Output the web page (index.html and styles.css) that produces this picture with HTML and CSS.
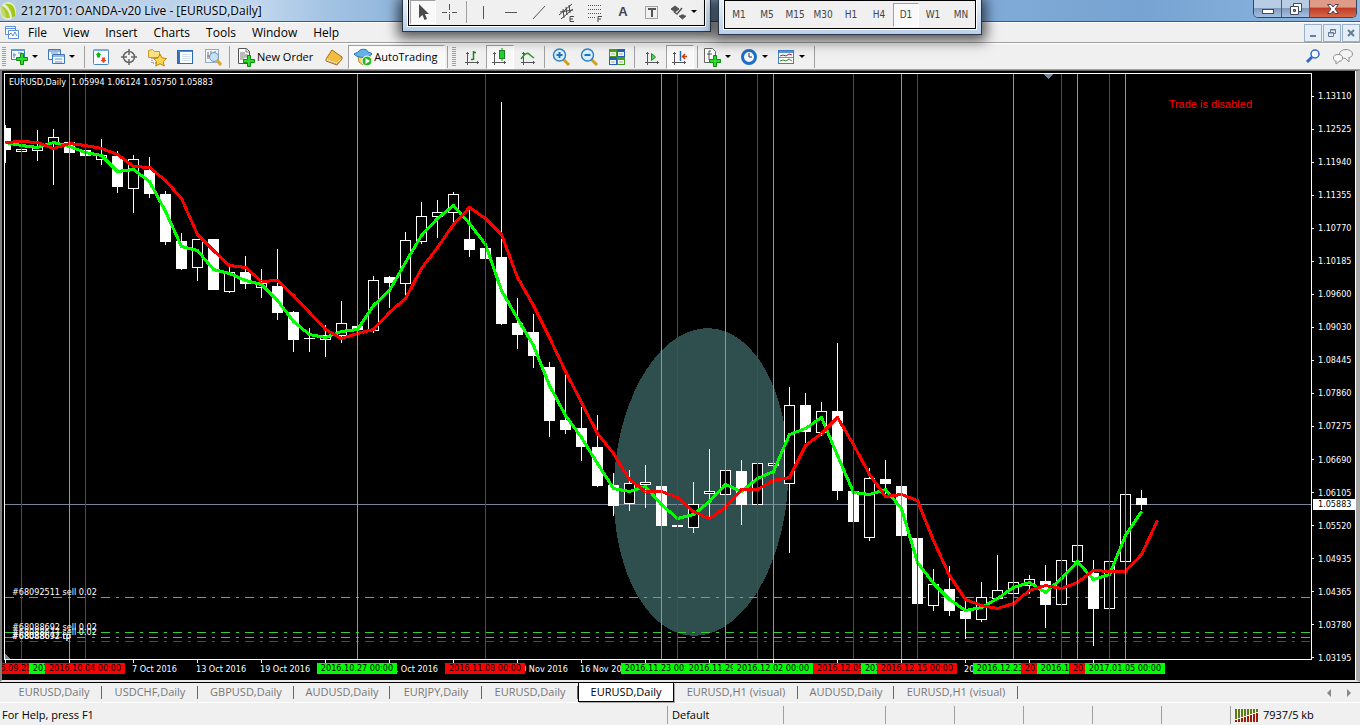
FILE: index.html
```html
<!DOCTYPE html>
<html lang="en">
<head>
<meta charset="utf-8">
<title>2121701: OANDA-v20 Live - [EURUSD,Daily]</title>
<link rel="stylesheet" href="styles.css">
</head>
<body>
<header class="titlebar">
  <svg class="logo" viewBox="0 0 18 20" width="18" height="20"><ellipse cx="8" cy="10" rx="8" ry="9" fill="#e6edd2"/><path d="M1 5C0 12 2 17 7 17V10C6 7 4 5 1 5Z" fill="#c3d96c"/><path d="M5 3C12 2 16 6 15 15L12 17C12 11 9 6 5 3Z" fill="#a3c814"/><path d="M1 5C7 7 9 11 10 17H6C6 11 4 8 1 5Z" fill="#a9ca28"/></svg>
  <h1 class="title">2121701: OANDA-v20 Live - [EURUSD,Daily]</h1>
  <div class="window-buttons">
    <button class="wb" aria-label="Minimize"><svg width="14" height="12"><rect x="1.500" y="6.500" width="11" height="4" fill="#fff" stroke="#444c5c"/></svg></button>
    <button class="wb" aria-label="Restore"><svg width="14" height="14"><path d="M4.500 1.500h8v8h-8z" fill="#fff" stroke="#444c5c"/><path d="M1.500 4.500h8v8h-8z" fill="#fff" stroke="#444c5c"/><path d="M4.500 7.500h2v2h-2z" fill="#7c93b5" stroke="#444c5c"/></svg></button>
    <button class="wb wb-close" aria-label="Close"><svg width="14" height="12"><path d="M1.500 1.500h3.500l2 2.500 2-2.500h3.500l-3.500 4.500 3.500 4.500h-3.500l-2-2.500-2 2.500h-3.500l3.500-4.500z" fill="#fff" stroke="#54404c"/></svg></button>
  </div>
</header>

<nav class="menubar">
  <svg class="doc-icon" width="15" height="16" viewBox="0 0 15 16"><path d="M.5 1.500h10v8H.5zM.5 3.500h10" fill="#fff" stroke="#5b8fd6"/><path d="M3.500 5.500h10v8h-10z" fill="#fff" stroke="#5b8fd6"/><path d="M4 10l2-2 2 3 2-4 2 4" fill="none" stroke="#5b8fd6"/></svg>
  <button class="menu">File</button><button class="menu">View</button><button class="menu">Insert</button><button class="menu">Charts</button><button class="menu">Tools</button><button class="menu">Window</button><button class="menu">Help</button>
  <div class="mdi-buttons">
    <button class="mdi" aria-label="Minimize chart"><svg width="10" height="10"><path d="M2 8h6" stroke="#667c94" stroke-width="2"/></svg></button>
    <button class="mdi" aria-label="Restore chart"><svg width="10" height="10"><path d="M3.500 4V1.500h5v4H7M3 2h6" fill="none" stroke="#667c94"/><path d="M1.500 4.500h5v4h-5zM1 5h6" fill="none" stroke="#667c94"/></svg></button>
    <button class="mdi" aria-label="Close chart"><svg width="10" height="10"><path d="M2 2l6 6M8 2l-6 6" stroke="#667c94" stroke-width="2"/></svg></button>
  </div>
</nav>

<div class="toolbar">
  <span class="grip"></span>
  <button class="tool drop" aria-label="New chart"><svg width="20" height="20"><path d="M2.500 2.500h13v10h-13z" fill="#f4faff" stroke="#3f78b8"/><path d="M2 3h14" stroke="#5d9ad8" stroke-width="2"/><path d="M5 6v5M4 8h3M9 6h4" stroke="#5d8ab8"/><path d="M11.500 6.500h3v4h4v3h-4v4h-3v-4h-4v-3h4z" fill="#2ede2e" stroke="#0c8a0c"/></svg><i class="caret"></i></button>
  <button class="tool drop" aria-label="Profiles"><svg width="20" height="20"><path d="M2.500 2.500h12v10h-12zM2 4h13" fill="#eef6ff" stroke="#3f78b8"/><path d="M6.500 7.500h12v9h-12zM6 9h13" fill="#eef6ff" stroke="#3f78b8"/><path d="M9 12h7M5 6h7M9 15h7" stroke="#6d9ccb"/></svg><i class="caret"></i></button>
  <span class="sep"></span>
  <button class="tool" aria-label="Market watch"><svg width="20" height="20"><rect x="2.500" y="2.500" width="15" height="15" rx="1" fill="#f8fbff" stroke="#4a86c6"/><path d="M3 3h14" stroke="#75aee6" stroke-width="2"/><path d="M7.500 5l3 3H9v2.500H6V8H4.500z" fill="#19b319"/><path d="M12.500 16l-3-3H11v-2.500h3V13h1.500z" fill="#e8481a"/></svg></button>
  <button class="tool" aria-label="Data window"><svg width="20" height="20"><circle cx="10" cy="10" r="5.500" fill="none" stroke="#666" stroke-width="1.500"/><path d="M10 2v6M10 12v6M2 10h6M12 10h6" stroke="#666" stroke-width="1.500"/></svg></button>
  <button class="tool" aria-label="Navigator"><svg width="20" height="20"><path d="M1.500 3.500l4-1 2 2h5v6h-11z" fill="#fbe184" stroke="#c9992a"/><path d="M5 11v5h5" stroke="#666" stroke-dasharray="1 1" fill="none"/><path d="M13 7l2 4 4.500.5-3.200 3 .9 4.500-4.200-2.300L8.800 19l.9-4.500-3.200-3 4.500-.5z" fill="#ffd84a" stroke="#b98314"/></svg></button>
  <button class="tool" aria-label="Terminal"><svg width="20" height="20"><rect x="2.500" y="3.500" width="15" height="13" fill="#fff" stroke="#2868b4"/><path d="M3 4h14v1H3z" fill="#4c93de"/><path d="M3 5h2v11H3z" fill="#3577c2"/><path d="M7 7.500h9M7 9.500h9M7 11.500h9M7 13.500h9" stroke="#d2dfec"/></svg></button>
  <button class="tool" aria-label="Strategy tester"><svg width="20" height="20"><rect x="2.500" y="2.500" width="13" height="13" fill="#f2f6fb" stroke="#92a9c2"/><path d="M5 5v7M8 4v6M12 4v6M4 9h3" stroke="#777"/><circle cx="11" cy="10" r="4.500" fill="#c3e1f7" stroke="#6f94ba"/><path d="M14 13l4 5" stroke="#dca529" stroke-width="3"/></svg></button>
  <span class="sep"></span>
  <button class="tool wide"><svg width="20" height="20"><path d="M2.500 1.500h8l3 3v12h-11z" fill="#fff" stroke="#555"/><path d="M10 2v3h3M4 6h5M4 8h8M4 10h8M4 12h4" stroke="#777" fill="none"/><path d="M11.500 8.500h3v4h4v3h-4v4h-3v-4h-4v-3h4z" fill="#2ede2e" stroke="#0c8a0c"/></svg>New Order</button>
  <button class="tool" aria-label="MetaEditor"><svg width="20" height="20"><path d="M8 3l10 7-5 7L2 12z" fill="#f1bc40" stroke="#a46a10"/><path d="M2 12l11 4.500 5-6" fill="none" stroke="#fff2b5"/><path d="M2 12v2l11 4 5-6v-2" fill="none" stroke="#a46a10"/></svg></button>
  <button class="tool wide pressed" aria-pressed="true"><svg width="20" height="20"><path d="M5 9l1 6 4 3 6-3 1-6z" fill="#f5d562" stroke="#b58a20"/><path d="M1 7c3-2 4-1 5-3s8-3 9 1c1 1 3 0 4 2-3 4-14 5-18 0z" fill="#62b4e8" stroke="#2a77b2"/><circle cx="14" cy="14" r="5" fill="#27b627" stroke="#fff"/><path d="M12.500 11l4.500 3-4.500 3z" fill="#fff"/></svg>AutoTrading</button>
  <span class="sep"></span><span class="grip"></span>
  <button class="tool" aria-label="Bar chart"><svg width="20" height="20"><path d="M5.500 5v13M3 15.500h14M4 6.500h3M15.500 14v3" stroke="#555" fill="none"/><path d="M11.500 4v9M9 12.500h2M12 5.500h2" stroke="#17861c" stroke-width="1.500"/></svg></button>
  <button class="tool pressed" aria-label="Candlesticks"><svg width="20" height="20"><path d="M4.500 5v13M2 15.500h14M3 6.500h3M14.500 14v3" stroke="#555" fill="none"/><path d="M12 1v13" stroke="#17861c"/><rect x="9.500" y="3.500" width="5" height="8" fill="#23d032" stroke="#17861c"/></svg></button>
  <button class="tool" aria-label="Line chart"><svg width="20" height="20"><path d="M5.500 5v13M3 15.500h14M4 6.500h3M15.500 14v3" stroke="#555" fill="none"/><path d="M3 12c4-6 7-7 9-4l4 3" stroke="#25992b" stroke-width="1.500" fill="none"/></svg></button>
  <span class="sep"></span>
  <button class="tool" aria-label="Zoom in"><svg width="20" height="20"><path d="M12 12l6 6" stroke="#d0a01c" stroke-width="3"/><circle cx="8.500" cy="8" r="6" fill="#d7efff" stroke="#3183c8" stroke-width="1.500"/><path d="M5.500 8h6M8.500 5v6" stroke="#2871b8" stroke-width="2"/></svg></button>
  <button class="tool" aria-label="Zoom out"><svg width="20" height="20"><path d="M12 12l6 6" stroke="#d0a01c" stroke-width="3"/><circle cx="8.500" cy="8" r="6" fill="#d7efff" stroke="#3183c8" stroke-width="1.500"/><path d="M5.500 8h6" stroke="#2871b8" stroke-width="2"/></svg></button>
  <button class="tool" aria-label="Tile windows"><svg width="20" height="20"><path d="M2 2h8v8H2zM10 10h8v8h-8z" fill="#4a9d1c"/><path d="M10 2h8v8h-8zM2 10h8v8H2z" fill="#2360c2"/><path d="M3 5h6v4H3zM11 5h6v4h-6zM3 13h6v4H3zM11 13h6v4h-6z" fill="#eef6e8"/><path d="M4 7h4M12 7h4M4 15h4M12 15h4" stroke="#9abf9a"/></svg></button>
  <span class="sep sep-wide"></span>
  <button class="tool" aria-label="Auto scroll"><svg width="20" height="20"><path d="M5.500 5v13M3 15.500h14M4 6.500h3M15.500 14v3" stroke="#555" fill="none"/><path d="M9.500 6.500l4 3.500-4 3.500z" fill="#46dc50" stroke="#17861c"/></svg></button>
  <button class="tool pressed" aria-label="Chart shift"><svg width="20" height="20"><path d="M4.500 5v13M2 15.500h14M3 6.500h3M14.500 14v3" stroke="#555" fill="none"/><path d="M10.500 4v10" stroke="#2470b8" stroke-width="1.500"/><path d="M13 9.500h4M15 7l-2.500 2.500L15 12" stroke="#d43b0e" stroke-width="1.500" fill="none"/></svg></button>
  <span class="sep sep-wide"></span>
  <button class="tool drop" aria-label="Indicators"><svg width="20" height="20"><path d="M2.500 1.500h8l3 3v11h-11z" fill="#fff" stroke="#666"/><path d="M9 4H7v9M5 7h5" stroke="#555" fill="none"/><path d="M11.500 8.500h3v4h4v3h-4v4h-3v-4h-4v-3h4z" fill="#2ede2e" stroke="#0c8a0c"/></svg><i class="caret"></i></button>
  <button class="tool drop" aria-label="Periods"><svg width="20" height="20"><circle cx="10" cy="10" r="6.500" fill="#f4f8ff" stroke="#1f6fc8" stroke-width="3"/><path d="M10 6v4h3" stroke="#333" fill="none"/></svg><i class="caret"></i></button>
  <button class="tool drop" aria-label="Templates"><svg width="20" height="20"><rect x="2.500" y="3.500" width="15" height="13" fill="#fff" stroke="#3f7fc4"/><path d="M3 4h14v2H3zM3 10h14v1H3z" fill="#5797dc"/><path d="M4 9l3-1 3 1 3-2 3 1" stroke="#a32626" fill="none"/><path d="M4 14l3-1 3 1 3-2 3 2" stroke="#2f8c2f" fill="none"/></svg><i class="caret"></i></button>
  <span class="sep"></span>
  <div class="toolbar-end">
    <button class="tool" aria-label="Search"><svg width="20" height="20"><circle cx="12" cy="7" r="4" fill="#f6faff" stroke="#2f68cc" stroke-width="1.500"/><path d="M9 10l-5 5" stroke="#2f68cc" stroke-width="3"/></svg></button>
    <button class="tool" aria-label="Chat"><svg width="22" height="18"><ellipse cx="14" cy="6" rx="6.500" ry="4.500" fill="#f4f4f4" stroke="#909090"/><path d="M17 9v5l-4-4" fill="#f4f4f4" stroke="#909090"/><ellipse cx="6" cy="10" rx="4.500" ry="3.500" fill="#fafafa" stroke="#909090"/><path d="M4 13v3l4-3" fill="#fafafa" stroke="#909090"/></svg></button>
  </div>
</div>

<div class="palette palette-draw">
  <div class="palette-body">
    <button class="pt pressed" aria-label="Cursor"><svg width="20" height="20"><path d="M6 2v14l3.500-3 2 5 2.500-1-2-5h4z" fill="#4b4b4b"/></svg></button>
    <button class="pt" aria-label="Crosshair"><svg width="20" height="20"><path d="M9.500 2v6M9.500 12v6M2 10.500h5M12 10.500h5M9 10.500h1" stroke="#555"/></svg></button>
    <span class="sep"></span>
    <button class="pt" aria-label="Vertical line"><svg width="20" height="20"><path d="M10.500 4v13" stroke="#555"/></svg></button>
    <button class="pt" aria-label="Horizontal line"><svg width="20" height="20"><path d="M4 10.500h12" stroke="#555"/></svg></button>
    <button class="pt" aria-label="Trendline"><svg width="20" height="20"><path d="M4 17L16 4" stroke="#555"/></svg></button>
    <button class="pt" aria-label="Equidistant channel"><svg width="20" height="20"><path d="M2 13L15 2M4 17L16 7M6 7l1 9M9 5l1 8M12 3l1 8M3 10l13-2" stroke="#444"/><path d="M17 14.500h-4v5h4M13 17h3" stroke="#444" fill="none"/></svg></button>
    <button class="pt" aria-label="Fibonacci"><svg width="20" height="20"><path d="M3 3.500h14M3 7.500h14M3 11.500h14M3 15.500h8" stroke="#555" stroke-dasharray="1 1"/><path d="M17 14.500h-4V20M13 17h3" stroke="#444" fill="none"/></svg></button>
    <button class="pt pt-text" aria-label="Text">A</button>
    <button class="pt" aria-label="Text label"><svg width="20" height="20"><path d="M4.500 4.500h12v12h-12z" fill="none" stroke="#555" stroke-dasharray="1 1"/><path d="M7 7h8M11 7v8" stroke="#555" stroke-width="2"/></svg></button>
    <button class="pt drop" aria-label="Arrows"><svg width="20" height="20"><path d="M2 7l4-3 4 3-4 3zM10 14h7l-3.500 3zM12 13h3v1h-3z" fill="#555" stroke="#555"/><path d="M13 6l-5 6-3-2" fill="none" stroke="#555" stroke-width="1.500"/></svg><i class="caret"></i></button>
  </div>
</div>

<div class="palette palette-time">
  <div class="palette-body">
    <button class="pt">M1</button><button class="pt">M5</button><button class="pt">M15</button><button class="pt">M30</button><button class="pt">H1</button><button class="pt">H4</button><button class="pt pressed">D1</button><button class="pt">W1</button><button class="pt">MN</button>
  </div>
</div>

<main class="chart">
  <div class="plot">
    <svg class="canvas" id="canvas" viewBox="5 74 1306 585" preserveAspectRatio="none" role="img" aria-label="EURUSD daily candlestick chart">
      <ellipse cx="701" cy="482" rx="87" ry="154" transform="rotate(3.6 701 482)" fill="#2f4f4f"/>
      <path d="M5 504.500H1311" stroke="#778899"/>
      <g stroke="#32cd32" stroke-dasharray="9 6 3 6"><path d="M5 597.500H1311"/><path d="M5 632.500H1311"/><path d="M5 637.500H1311"/><path d="M5 641.500H1311" stroke="#f00"/></g>
      <g id="candles" stroke="#fff"></g>
      <g id="averages" fill="none" stroke-width="3" stroke-linejoin="round"></g>
      <g id="signals"></g>
      <path d="M1044 74h9l-4.500 5zM5 654v5h5z" fill="#778899"/>
    </svg>
    <p class="quote">EURUSD,Daily&nbsp; 1.05994 1.06124 1.05750 1.05883</p>
    <p class="notice">Trade is disabled</p>
    <p class="order order-a">#68092511 sell 0.02</p>
    <p class="order order-b">#68088692 sell 0.02</p>
    <p class="order order-c">#68088677 sell 0.02</p>
    <p class="order order-d">#68088692 tp</p>
    <p class="order order-d">#68088677 tp</p>
  </div>
  <div class="prices" id="prices"><span class="last-price">1.05883</span></div>
  <div class="times" id="times"></div>
</main>

<nav class="tabs">
  <a class="tab" href="#">EURUSD,Daily</a><a class="tab" href="#">USDCHF,Daily</a><a class="tab" href="#">GBPUSD,Daily</a><a class="tab" href="#">AUDUSD,Daily</a><a class="tab tab-short" href="#">EURJPY,Daily</a><a class="tab" href="#">EURUSD,Daily</a><a class="tab active" href="#">EURUSD,Daily</a><a class="tab tab-long" href="#">EURUSD,H1 (visual)</a><a class="tab" href="#">AUDUSD,Daily</a><a class="tab tab-long" href="#">EURUSD,H1 (visual)</a>
  <div class="tab-scroll">
    <button aria-label="Previous tabs"><svg width="5" height="8"><path d="M4 0v8L0 4z" fill="#888"/></svg></button>
    <button aria-label="Next tabs"><svg width="5" height="8"><path d="M1 0v8l4-4z" fill="#888"/></svg></button>
  </div>
</nav>

<footer class="status">
  <span class="help">For Help, press F1</span>
  <span class="cell cell-profile">Default</span><span class="cell cell-time"></span><span class="cell"></span><span class="cell"></span><span class="cell"></span><span class="cell"></span><span class="cell"></span>
  <span class="cell cell-traffic"><svg width="24" height="13"><path d="M1 0v10M4 0v9M7 0v8M10 0v7M13 0v6M16 0v5M19 0v4M22 0v3" stroke="#5f7a10" stroke-width="2"/><path d="M1 11v2M4 10v3M7 9v4M10 8v5M13 7v6M16 6v7M19 5v8M22 4v9" stroke="#9c1c08" stroke-width="2"/></svg>7937/5 kb</span>
</footer>
<script src="chart.js"></script>
</body>
</html>
```

FILE: styles.css
```css
* { box-sizing: border-box; }
body {
  margin: 0;
  min-height: 100vh;
  display: flex;
  flex-direction: column;
  background: #f0f0f0;
  color: #000;
  font: 12px/16px "Open Sans", "Noto Sans", sans-serif;
  overflow: hidden;
  position: relative;
}
h1, p { margin: 0; font: inherit; }
button { margin: 0; padding: 0; border: 0; background: none; font: inherit; color: inherit; }
svg { display: block; flex: none; }

.titlebar {
  height: 22px;
  display: flex;
  align-items: center;
  gap: 3px;
  border-bottom: 1px solid #4a5868;
  background: linear-gradient(90deg, #b4cbe2 0, #c0d6ee 260px, #a2c2e2 330px, #90b5dc 400px, #7fa9d6 75%, #76a3d2 84%, #8fb8e2 100%);
}
.title { flex: 1; white-space: nowrap; text-shadow: 0 0 5px #fff; }
.window-buttons {
  display: flex;
  align-self: flex-start;
  height: 18px;
  margin-right: 3px;
  border: 1px solid #34455c;
  border-top: 0;
  border-radius: 0 0 5px 5px;
  overflow: hidden;
}
.wb {
  width: 28px;
  display: grid;
  place-items: center;
  border-right: 1px solid #4a5c78;
  background: linear-gradient(#b8cce4 0 45%, #829cc0 50%, #a4c0e0);
}
.wb-close { width: 46px; border: 0; background: linear-gradient(#e09a88 0 40%, #c03c28 50%, #d46a4a); }

.menubar { height: 21px; display: flex; align-items: center; padding-left: 5px; border-bottom: 1px solid #a0a0a0; border-top: 1px solid #fff; }
.menu { padding: 0 8px; line-height: 18px; }
.mdi-buttons { margin-left: auto; display: flex; gap: 1px; }
.mdi { width: 18px; height: 18px; display: grid; place-items: center; border: 1px solid #9ab0c8; background: #e4eef8; }

.toolbar { height: 27px; display: flex; align-items: center; border-top: 1px solid #fff; border-bottom: 1px solid #a0a0a0; font-size: 11px; }
.grip { width: 4px; height: 20px; margin: 0 2px; background: repeating-linear-gradient(#a0a0a0 0 1px, #f0f0f0 1px 2px); }
.sep { width: 1px; height: 22px; margin: 0 2px; background: #a0a0a0; flex: none; }
.sep-wide { margin: 0 3px; }
.tool { width: 28px; height: 24px; display: flex; align-items: center; justify-content: center; }
.drop { width: 37px; justify-content: flex-start; gap: 3px; padding-left: 1px; }
.wide { width: auto; padding: 0 7px 0 4px; gap: 1px; white-space: nowrap; }
.caret { border: 3px solid transparent; border-top-color: #000; border-bottom: 0; width: 0; height: 0; }
.pressed { background: #f9f9f9; border: 1px solid #fff; border-top-color: #a0a0a0; border-left-color: #a0a0a0; }
.toolbar-end { margin-left: auto; display: flex; gap: 2px; padding-right: 3px; }

/* Floating tool windows */
.palette {
  position: absolute;
  top: 0;
  padding: 0 5px 5px;
  border: 1px solid #2c3846;
  border-top: 0;
  background: linear-gradient(#e8f0fa, #b9d0ec);
  box-shadow: 0 2px 12px 4px rgba(0, 0, 0, .65);
}
.palette-draw { left: 402px; }
.palette-time { left: 718px; }
.palette-body {
  display: flex;
  align-items: center;
  padding: 0 1px;
  border: 1px solid #000;
  border-top: 0;
  background: #f0f0f0;
  outline: 1px solid #fff;
}
.palette-draw .palette-body { height: 26px; padding-bottom: 2px; }
.palette-time .palette-body { height: 29px; padding: 0; border-top: 1px solid #000; }
.pt { width: 28px; height: 24px; display: flex; align-items: center; justify-content: center; color: #444; font: 10px/12px "DejaVu Sans Condensed", sans-serif; }
.pt.pressed { width: 26px; }
.pt-text { font: bold 13px/16px "Liberation Sans", sans-serif; }
.pt.drop { width: 38px; justify-content: flex-start; padding-left: 4px; gap: 2px; }

.chart {
  flex: 1;
  display: grid;
  grid-template: 1fr 20px / 1fr 44px;
  padding: 2px 0 0 2px;
  background: #000;
  border-top: 1px solid #696969;
  border-left: 2px solid #808080;
  border-right: 4px solid #a8a8a8;
  border-bottom: 2px solid #e8e8e8;
  box-shadow: inset -1px 0 #fff;
  color: #fff;
  font: 9px/12px "DejaVu Sans Condensed", sans-serif;
}
.plot { position: relative; border: 1px solid #fff; min-height: 0; }
.canvas { position: absolute; inset: 0; width: 100%; height: 100%; shape-rendering: crispEdges; }
.quote, .notice, .order { position: absolute; white-space: nowrap; }
.quote { left: 4px; top: 2px; }
.notice { right: 59px; top: 24px; color: #f00; font: 11px/12px "Liberation Sans", sans-serif; }
.order { left: 7px; }
.order-a { bottom: 61px; }
.order-b { bottom: 26px; }
.order-c { bottom: 21px; }
.order-d { bottom: 17px; }

.prices { position: relative; display: flex; flex-direction: column; justify-content: space-between; padding: 17px 0 0; margin-bottom: -4px; }
.price { display: flex; align-items: center; gap: 4px; }
.price::before { content: ""; width: 2px; height: 1px; background: #fff; }
.last-price { position: absolute; left: 1px; right: 1px; top: 72%; padding-left: 5px; background: #fff; color: #000; line-height: 11px; }

.times { position: relative; overflow: hidden; grid-column: 1 / 3; margin-left: -2px; }
.tick, .date, .tag { position: absolute; white-space: nowrap; }
.tick { top: 0; width: 1px; height: 3px; background: #fff; }
.date { top: 3px; }
.tag { top: 3px; width: 80px; height: 11px; line-height: 11px; text-align: center; color: #000; background: #f00; overflow: hidden; }
.tag-buy { background: #0f0; }

.tabs { height: 21px; display: flex; border-top: 1px solid #000; padding-left: 6px; border-bottom: 1px solid #fff; font-size: 11px; }
.tab { flex: 0 0 96px; height: 19px; position: relative; text-align: center; line-height: 18px; color: #777; text-decoration: none; white-space: nowrap; }
.tab::after { content: ""; position: absolute; right: 0; top: 3px; bottom: 3px; width: 1px; background: #666; }
.tab-short { flex-basis: 92px; }
.tab-long { flex-basis: 124px; }
.active { background: #fff; color: #000; border: 1px solid #000; border-top: 0; box-shadow: 1px 1px #aaa; }
.active::after { display: none; }
.tab-scroll { margin-left: auto; display: flex; gap: 14px; padding-right: 9px; align-items: center; }

.status { height: 22px; display: flex; align-items: center; padding: 2px 0 0 2px; font-size: 11px; }
.help { flex: 1; }
.cell { flex: 0 0 69px; height: 18px; display: flex; align-items: center; gap: 4px; padding-left: 4px; border-left: 1px solid #a0a0a0; }
.cell-profile { flex-basis: 116px; }
.cell-time { flex-basis: 102px; }
.cell-traffic { flex-basis: 130px; }
```

FILE: chart.js
```js
const STEP = 16, ORIGIN = 5;

// high, low, body top, body bottom, filled
const candles = [
  [125,163,128,150,1],[149,151,149,151,0],[130,161,146,150,0],[129,185,137,142,0],[142,153,142,153,1],[150,156,150,156,1],
  [139,165,155,159,0],[151,193,156,187,1],[155,213,159,188,0],[157,198,170,194,1],[191,245,194,242,1],[233,270,241,269,1],
  [239,281,239,267,0],[239,290,239,290,1],[267,293,272,291,0],[256,289,272,284,1],[269,298,283,287,0],[249,320,286,313,1],
  [311,352,312,340,1],[328,352,338,339,1],[325,357,335,339,0],[301,343,323,335,0],[326,330,326,330,1],[276,333,280,330,0],
  [276,308,277,283,1],[232,295,240,283,0],[202,244,216,241,0],[200,238,212,216,0],[192,227,194,212,0],[209,257,239,250,1],
  [248,259,248,259,1],[102,325,257,324,1],[298,349,323,335,1],[314,368,332,356,1],[362,437,367,421,1],[375,434,420,430,1],
  [407,461,428,447,1],[415,487,447,486,1],[473,516,485,506,1],[470,511,483,503,0],[465,508,482,484,0],[486,526,486,526,1],
  [525,527,525,527,1],[482,533,504,527,0],[449,518,491,493,0],[470,494,470,494,0],[460,525,471,505,1],[463,504,463,504,0],
  [463,465,463,465,0],[387,553,405,483,0],[393,443,405,432,1],[402,436,411,432,0],[343,500,411,491,1],[491,522,491,522,1],
  [468,541,478,537,0],[460,494,479,484,1],[486,536,486,536,1],[538,604,538,604,1],[569,611,584,605,0],[566,616,589,611,1],
  [601,639,611,619,1],[582,622,597,619,0],[555,599,590,598,0],[582,593,582,593,0],[575,594,579,585,0],[565,628,581,605,1],
  [560,604,560,604,0],[545,561,545,561,0],[560,646,573,609,1],[561,608,561,608,0],[494,561,494,561,0],[490,510,498,505,1]
];
const fast = [142,145,147,142,146,152,155,171,169,181,211,246,250,269,273,280,284,300,321,334,337,331,329,305,290,262,235,218,205,223,244,290,318,345,385,415,437,463,488,491,486,504,518,514,501,484,491,478,471,434,428,417,455,492,494,489,508,562,583,599,610,607,598,587,582,592,578,561,579,574,535,511];
const slow = [142,141,142,148,143,145,148,154,166,167,180,198,234,250,265,267,281,280,295,312,329,338,333,329,312,298,268,247,224,207,218,234,277,305,337,371,402,433,453,479,491,491,497,511,518,507,489,489,480,477,445,433,417,444,474,496,494,500,540,575,599,605,608,603,590,585,588,582,570,571,571,554,520];
const sells = [21,85,485,677,757,853,917,1061,1109];
const buys = [69,357,661,725,773,901,1013,1077,1125];

const byId = id => document.getElementById(id);
const x = i => ORIGIN + STEP * i;

byId('candles').innerHTML = candles.map(([h, l, t, b, full], i) => {
  const c = x(i);
  const wick = `<path d="M${c + .5} ${h}V${l}"/>`;
  return full
    ? `${wick}<rect x="${c - 5}" y="${t}" width="11" height="${b - t}" fill="#fff" stroke="none"/>`
    : `${wick}<rect x="${c - 4.5}" y="${t + .5}" width="10" height="${b - t}" fill="#000"/>`;
}).join('');

const line = (ys, color) =>
  `<polyline stroke="${color}" points="${ys.map((y, i) => `${x(i) + .5},${y + .5}`).join(' ')}"/>`;
byId('averages').innerHTML = line(fast, '#0f0') + line(slow, '#f00');

const rules = (xs, color) => xs.map(v => `<path d="M${v + .5} 74V659" stroke="${color}"/>`).join('');
byId('signals').innerHTML = rules(sells, '#f00') + rules(buys, '#0f0');

const prices = ['1.13110','1.12525','1.11940','1.11355','1.10770','1.10185','1.09600','1.09030','1.08445','1.07860','1.07275','1.06690','1.06105','1.05520','1.04935','1.04365','1.03780','1.03195'];
byId('prices').insertAdjacentHTML('afterbegin', prices.map(p => `<span class="price">${p}</span>`).join(''));

const place = v => `left:${((v - 2) / 1354 * 100).toFixed(3)}%`;
let html = '';
for (let v = 5; v < 1100; v += 64) html += `<i class="tick" style="${place(v)}"></i>`;
[[132,'7 Oct 2016'],[196,'13 Oct 2016'],[260,'19 Oct 2016'],[388,'31 Oct 2016'],[516,'10 Nov 2016'],[580,'16 Nov 2016'],[964,'20 Dec 2016']]
  .forEach(([v, t]) => { html += `<span class="date" style="${place(v)}">${t}</span>`; });
[[21,'2016.09.28',0],[69,'2016.10.03',1],[85,'2016.10.04',0],[357,'2016.10.27',1],[485,'2016.11.08',0],[661,'2016.11.23',1],
 [725,'2016.11.29',1],[773,'2016.12.02',1],[853,'2016.12.09',0],[901,'2016.12.14',1],[917,'2016.12.15',0],[1013,'2016.12.23',1],
 [1061,'2016.12.29',0],[1077,'2016.12.30',1],[1109,'2017.01.04',0],[1125,'2017.01.05',1]]
  .forEach(([v, t, buy]) => { html += `<span class="tag${buy ? ' tag-buy' : ''}" style="${place(v - 40)}">${t} 00:00</span>`; });
byId('times').innerHTML = html;
```
